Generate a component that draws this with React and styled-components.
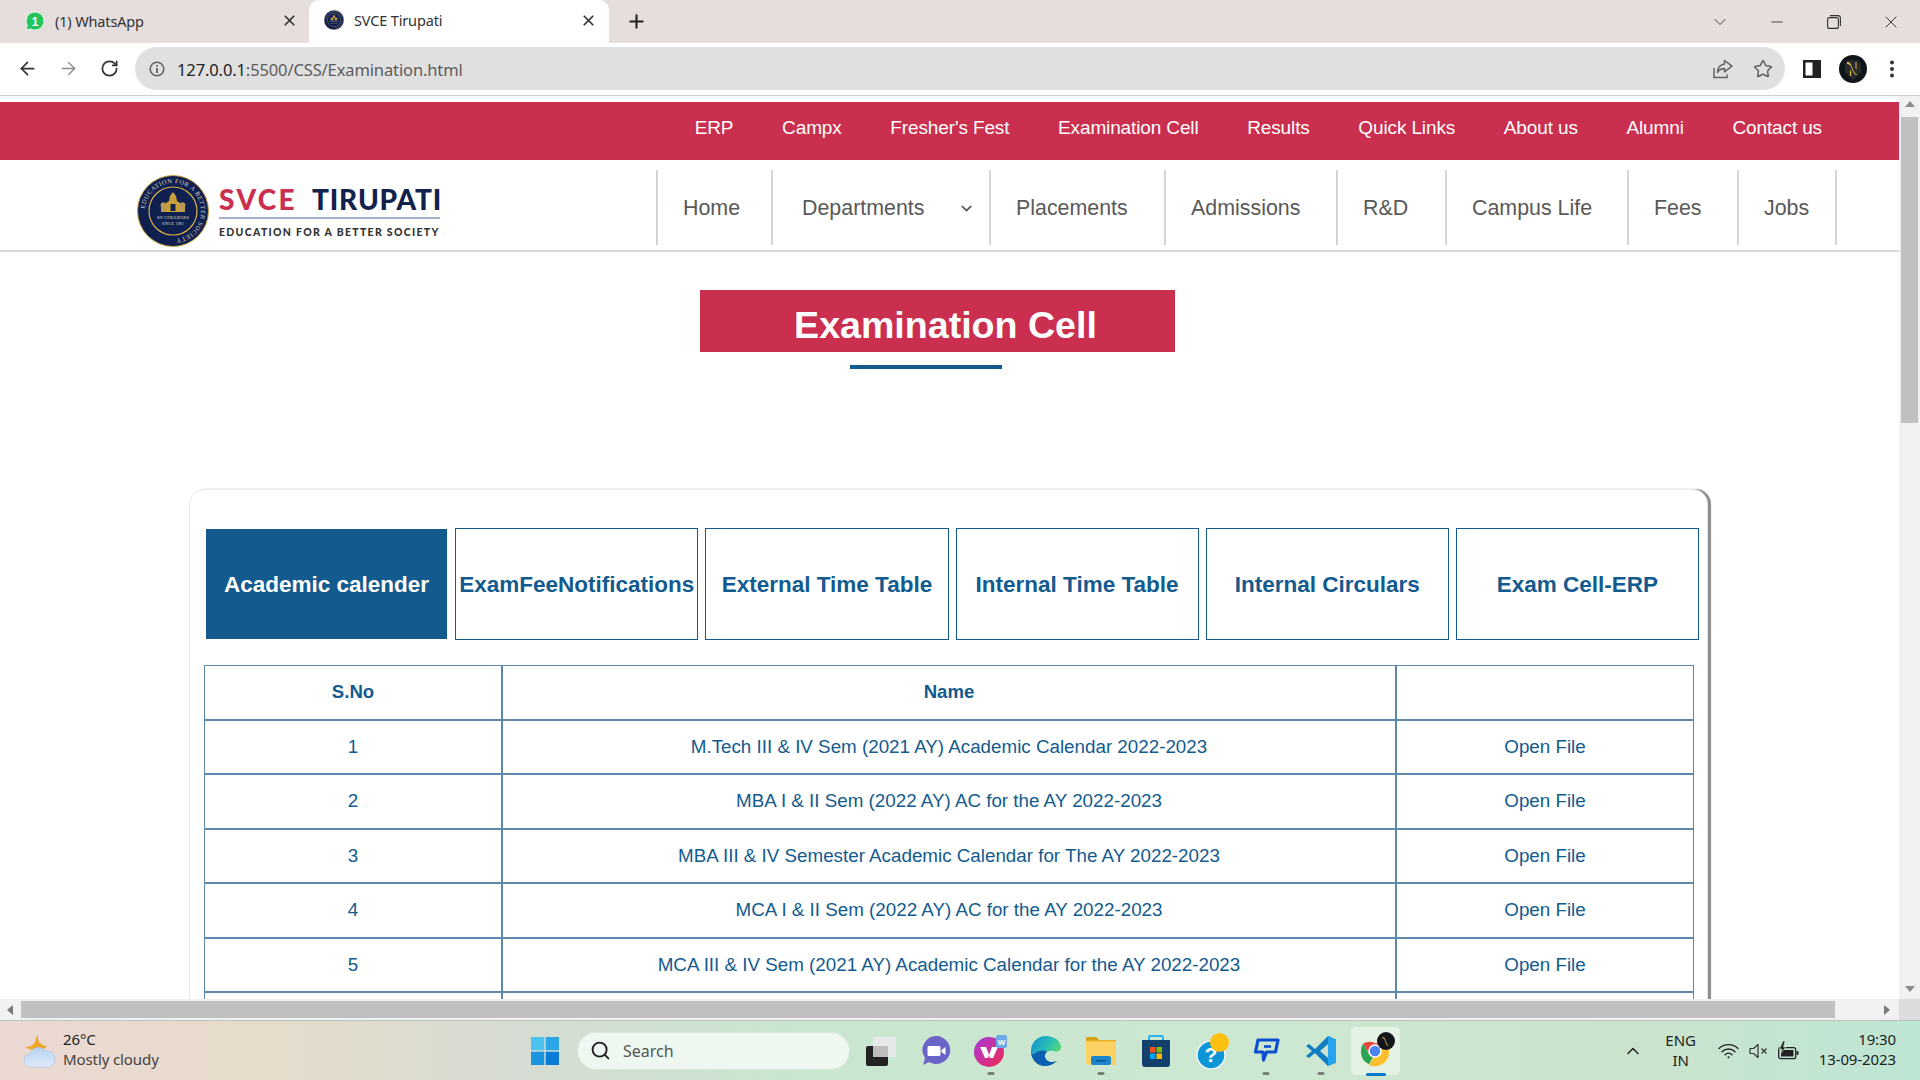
import styled, { createGlobalStyle } from 'styled-components'
import { ArrowLeft, ArrowRight, RotateCw, Star, ChevronDown, ChevronUp, X, Plus, Minus, Search } from 'lucide-react'

const GlobalStyle = createGlobalStyle`
    html, body {
        margin: 0;
        padding: 0;
        overflow: hidden;
        background: #fff;
        font-family: "Liberation Sans", Arial, sans-serif;
    }
    * { box-sizing: border-box; }
`;

const uiFont = `"Noto Sans", "Open Sans", sans-serif`;
const red = '#cb2f4f';
const blue = '#135b8e';

const Screen = styled.div`
    width: 1920px;
    height: 1080px;
    display: flex;
    flex-direction: column;
    overflow: hidden;
`;

/* browser chrome */
const TabStrip = styled.div`
    height: 43px;
    flex: none;
    display: flex;
    align-items: flex-end;
    background: #e6dedd;
    font-family: ${uiFont};
    color: #333;
`;

const Tab = styled.div`
    width: 300px;
    height: ${p => (p.$active ? '43px' : '40px')};
    margin-left: ${p => (p.$active ? '3px' : '6px')};
    padding: ${p => (p.$active ? '0 12px 3px 15px' : '0 8px 5px 19px')};
    display: flex;
    align-items: center;
    gap: 10px;
    font-size: 14.5px;
    background: ${p => (p.$active ? '#fff' : 'transparent')};
    border-radius: 10px 10px 0 0;
    letter-spacing: -0.15px;
`;

const TabTitle = styled.span`
    flex: 1;
`;

const NewTab = styled.div`
    width: 46px;
    height: 43px;
    margin-left: 4px;
    display: flex;
    align-items: center;
    justify-content: center;
    color: #222;
`;

const WindowControls = styled.div`
    margin-left: auto;
    padding-right: 1px;
    height: 43px;
    display: flex;
    align-items: center;
    color: #333;
`;

const WindowButton = styled.div`
    width: 57px;
    display: flex;
    justify-content: center;
`;

const Toolbar = styled.div`
    height: 53px;
    flex: none;
    display: flex;
    align-items: center;
    padding: 0 0 1px 0;
    background: #fff;
    border-bottom: 1px solid #cfcfcf;
`;

const NavButtons = styled.div`
    width: 135px;
    padding-left: 7px;
    display: flex;
    align-items: center;
`;

const NavButton = styled.div`
    width: 41px;
    display: flex;
    justify-content: center;
    color: ${p => (p.$off ? '#8a8a8a' : '#333')};
`;

const AddressBar = styled.div`
    width: 1650px;
    height: 43px;
    display: flex;
    align-items: center;
    padding: 0 0 0 14px;
    background: #e0e0e0;
    border-radius: 22px;
    font-family: ${uiFont};
    font-size: 16.5px;
    color: #5c5c5c;
`;

const Address = styled.span`
    margin-left: 12px;
    padding-top: 2px;
    letter-spacing: -0.12px;
    flex: 1;
    b {
        font-weight: 400;
        color: #222;
    }
`;

const PillIcons = styled.div`
    display: flex;
    align-items: center;
    gap: 19px;
    padding-right: 12px;
    color: #5f6368;
`;

const ToolbarIcons = styled.div`
    display: flex;
    align-items: center;
    margin-left: 18px;
    gap: 18px;
    svg:last-child {
        margin-left: 4px;
    }
`;

/* page area */
const Viewport = styled.div`
    flex: 1;
    min-height: 0;
    display: flex;
`;

const Page = styled.div`
    flex: 1;
    min-width: 0;
    padding-top: 6px;
    overflow: hidden;
    background: #fff;
`;

const VScroll = styled.div`
    width: 21px;
    flex: none;
    display: flex;
    flex-direction: column;
    align-items: center;
    background: #f1f1f1;
    color: #8c8c8c;
`;

const VThumb = styled.div`
    width: 17px;
    height: 306px;
    margin-top: 3px;
    background: #c0c0c0;
`;

const ScrollArrow = styled.div`
    height: 18px;
    width: 18px;
    flex: none;
    display: flex;
    align-items: center;
    justify-content: center;
    margin-top: ${p => (p.$end ? 'auto' : '0')};
    margin-left: ${p => p.$gap || 0}px;
`;

const HScroll = styled.div`
    height: 21px;
    flex: none;
    display: flex;
    align-items: center;
    padding-left: 2px;
    background: #f1f1f1;
    color: #7a7a7a;
`;

const HThumb = styled.div`
    width: 1814px;
    height: 17px;
    margin-left: 1px;
    background: #c0c0c0;
`;

const Corner = styled.div`
    width: 21px;
    height: 21px;
    margin-left: auto;
    background: #dcdcdc;
`;

const TopBar = styled.nav`
    height: 58px;
    display: flex;
    align-items: center;
    justify-content: flex-end;
    gap: 48.7px;
    padding: 0 77px 6px 0;
    background: ${red};
    color: #fff;
    font-size: 19px;
    letter-spacing: -0.13px;
`;

const MainHeader = styled.header`
    height: 92px;
    display: flex;
    border-bottom: 2px solid #ddd6d6;
`;

const Logo = styled.div`
    width: 656px;
    padding: 15px 0 0 137px;
    display: flex;
    gap: 10px;
`;

const LogoText = styled.div`
    display: flex;
    flex-direction: column;
    width: 221px;
    padding-top: 10px;
`;

const LogoTitle = styled.div`
    font-family: Lato, sans-serif;
    font-weight: 900;
    font-size: 28px;
    line-height: 29px;
    letter-spacing: 0.8px;
    white-space: nowrap;
    color: #12224e;
    padding-bottom: 3px;
    border-bottom: 2px solid #a3b1c6;
    span {
        color: ${red};
        letter-spacing: 2.4px;
        margin-right: 15px;
    }
`;

const LogoTag = styled.div`
    font-family: Lato, sans-serif;
    font-weight: 900;
    font-size: 10.5px;
    letter-spacing: 1.3px;
    white-space: nowrap;
    color: #333;
    margin-top: 7px;
`;

const MainNav = styled.nav`
    display: flex;
    height: 75px;
    margin-top: 10px;
    border-right: 2px solid #d9d3d3;
`;

const MainNavItem = styled.div`
    width: ${p => p.$w}px;
    padding: 2px 0 0 ${p => (p.$drop ? 29 : 25)}px;
    display: flex;
    align-items: center;
    border-left: 2px solid #d9d3d3;
    font-size: 21.4px;
    color: #595959;
    svg {
        margin-left: 34px;
    }
`;

const Banner = styled.h1`
    width: 475px;
    height: 62px;
    margin: 38px 0 0 700px;
    padding: 8px 0 0 16px;
    display: flex;
    align-items: center;
    justify-content: center;
    background: ${red};
    color: #fff;
    font-size: 37.6px;
    font-weight: 700;
`;

const BannerRule = styled.div`
    width: 152px;
    height: 4px;
    margin: 13px 0 0 850px;
    background: ${blue};
`;

const Card = styled.section`
    width: 1519px;
    margin: 120px 0 0 189px;
    padding: 38px 8px 0 15px;
    background: #fff;
    border: 1px solid #e8e8e8;
    border-radius: 15px 15px 0 0;
    box-shadow: 3px 0 1px #8c8c8c;
`;

const TabGrid = styled.div`
    display: grid;
    grid-template-columns: repeat(6, 1fr);
    gap: 7px;
`;

const TabButton = styled.div`
    height: 112px;
    padding-top: 1px;
    display: flex;
    align-items: center;
    justify-content: center;
    border: 1px solid ${p => (p.$active ? 'transparent' : blue)};
    background: ${p => (p.$active ? blue : '#fff')};
    background-clip: padding-box;
    color: ${p => (p.$active ? '#fff' : blue)};
    font-size: 22.5px;
    font-weight: 700;
    white-space: nowrap;
`;

const Table = styled.table`
    width: 1490px;
    margin: 25px 0 0 -1px;
    border-collapse: separate;
    border-spacing: 0;
    table-layout: fixed;
    border: 1px solid #5f89aa;
    border-bottom: none;
    color: ${blue};
    font-size: 18.8px;
    text-align: center;
`;

const Cell = styled.td`
    height: 54.5px;
    padding: 0;
    border-bottom: 2px solid #5f89aa;
    border-right: 2px solid #5f89aa;
    font-weight: ${p => (p.$head ? 700 : 400)};
    font-size: ${p => (p.$head ? '18.6px' : 'inherit')};
    &:last-child {
        border-right: none;
    }
`;

/* taskbar */
const Taskbar = styled.div`
    height: 60px;
    flex: none;
    display: flex;
    align-items: center;
    border-top: 1px solid #b8c2b8;
    background: linear-gradient(90deg, #ecd8d3 0%, #e6dccb 14%, #d6dcd3 27%, #c9e6cf 42%, #cde8d2 65%, #cbe3cd 85%, #bde6d4 100%);
    font-family: ${uiFont};
    color: #222;
`;

const Weather = styled.div`
    width: 525px;
    padding-left: 24px;
    display: flex;
    align-items: center;
    gap: 7px;
`;

const WeatherText = styled.div`
    font-size: 15px;
    line-height: 20px;
    margin-top: -4px;
    letter-spacing: -0.1px;
    span {
        display: block;
        color: #444;
    }
`;

const StartCell = styled.div`
    width: 40px;
    display: flex;
    justify-content: center;
`;

const SearchPill = styled.div`
    width: 273px;
    height: 38px;
    margin: 0 3px 0 12px;
    padding-left: 12px;
    display: flex;
    align-items: center;
    gap: 12px;
    border-radius: 19px;
    background: #eef7f0;
    border: 1px solid #dbe8dc;
    font-size: 16px;
    color: #555;
`;

const TaskCell = styled.div`
    position: relative;
    width: 55px;
    height: 48px;
    display: flex;
    align-items: center;
    justify-content: center;
    &::before {
        content: '';
        position: absolute;
        inset: 0 3px;
        border-radius: 5px;
        background: ${p => (p.$active ? '#e4f2e3' : 'transparent')};
    }
    svg {
        position: relative;
    }
`;

const RunDot = styled.span`
    position: absolute;
    bottom: ${p => (p.$active ? '-1px' : '0')};
    left: 50%;
    width: ${p => (p.$active ? '20px' : '7px')};
    height: 3px;
    transform: translateX(-50%);
    border-radius: 2px;
    background: ${p => (p.$active ? '#0b78d0' : '#778077')};
`;

const Tray = styled.div`
    margin-left: auto;
    padding-right: 24px;
    display: flex;
    align-items: center;
    font-size: 15px;
`;

const Lang = styled.div`
    width: 46px;
    margin: -2px 0 0 15px;
    text-align: center;
    line-height: 20px;
`;

const TrayIcons = styled.div`
    display: flex;
    align-items: center;
    gap: 10px;
    margin-left: 14px;
`;

const Clock = styled.div`
    margin: -4px 0 0 20px;
    text-align: right;
    line-height: 20px;
    letter-spacing: -0.1px;
`;

const Medallion = ({ size = 72 }) => (
    <svg width={size} height={size} viewBox="0 0 72 72">
        <defs>
            <path id="ringPath" d="M36 36 m-28 0 a28 28 0 1 1 56 0 a28 28 0 1 1 -56 0" />
        </defs>
        <circle cx="36" cy="36" r="35.5" fill="#0f1f50" stroke="#c9a23f" />
        <circle cx="36" cy="36" r="24" fill="none" stroke="#d8ae45" strokeWidth="1.2" />
        <text fontSize="6.4" fill="#d9d6c4" fontFamily="Liberation Serif, serif" letterSpacing="0.55">
            <textPath href="#ringPath" startOffset="2">EDUCATION FOR A BETTER SOCIETY</textPath>
        </text>
        <path d="M36 17 l3 4 l1 5 l3 2 v9 h-14 v-9 l3 -2 l1 -5z" fill="#c99f3c" />
        <path d="M24 32 a3 3 0 1 1 5 0 v5 h-5z M43 32 a3 3 0 1 1 5 0 v5 h-5z" fill="#b89a55" />
        <rect x="33.5" y="29" width="5" height="7" fill="#14244f" />
        <text x="36" y="43.500" fontSize="4.800" fill="#e4e0cf" textAnchor="middle" fontFamily="Liberation Serif, serif">SV COLLEGES</text>
        <text x="36" y="50" fontSize="3.600" fill="#e4e0cf" textAnchor="middle" fontFamily="Liberation Serif, serif" letterSpacing="0.4">SINCE 1981</text>
    </svg>
)

const WhatsAppIcon = () => (
    <svg width="20" height="20" viewBox="0 0 20 20">
        <path d="M10 1a9 9 0 0 0-7.7 13.6L1.2 19l4.5-1.1A9 9 0 1 0 10 1z" fill="#25c45a" stroke="#e9f7ea" />
        <text x="10" y="14.5" fontSize="12" fontWeight="700" fill="#fff" textAnchor="middle" fontFamily="Liberation Sans, sans-serif">1</text>
    </svg>
)

const ShareIcon = () => (
    <svg width="22" height="20" viewBox="0 0 22 20" fill="none" stroke="currentColor" strokeWidth="1.5">
        <path d="M2 9v9.5h13v-3" />
        <path d="M12.5 1.5 20 7.2l-7.5 5.6V9.4c-3.2 0-5.2 1.2-7 4 .4-4.700 3-7.800 7-8.300z" strokeLinejoin="round" />
    </svg>
)

const SidebarIcon = () => (
    <svg width="18" height="18" viewBox="0 0 18 18">
        <path d="M0 0h18v18H0z" fill="#222" />
        <path d="M2.500 2.500h7v13h-7z" fill="#fff" />
    </svg>
)

const Avatar = () => (
    <svg width="28" height="28" viewBox="0 0 28 28">
        <circle cx="14" cy="14" r="14" fill="#10151a" />
        <path d="M6 9 9 5h10l3 4v8l-8 8-8-8z" fill="#262b30" />
        <path d="M8 7c3 0 3.500 1 5 5s3 7 6 8l-2 0c-2-1-3.500-4-4.500-7S10 9 8 9zM11 21l0-7 1.200 3 0 4zM17.500 7v8l-1-2V7z" fill="#d9b33f" />
    </svg>
)

const DotsIcon = () => (
    <svg width="6" height="18" viewBox="0 0 6 18" fill="#333">
        <circle cx="3" cy="2.500" r="2" />
        <circle cx="3" cy="9" r="2" />
        <circle cx="3" cy="15.500" r="2" />
    </svg>
)

const InfoIcon = () => (
    <svg width="16" height="16" viewBox="0 0 16 16" fill="none" stroke="#5f6368" strokeWidth="1.500">
        <circle cx="8" cy="8" r="6.800" />
        <path d="M8 7v5M8 4v1.700" strokeWidth="1.800" />
    </svg>
)

const RestoreIcon = () => (
    <svg width="14" height="14" viewBox="0 0 14 14" fill="none" stroke="#333" strokeWidth="1.100">
        <rect x="0.600" y="2.600" width="10.800" height="10.800" rx="2" />
        <path d="M3 .6h8a2.400 2.400 0 0 1 2.400 2.400v8" />
    </svg>
)

const Triangle = ({ dir }) => {
    const pts = { up: '0,7 5,1 10,7', down: '0,1 5,7 10,1', left: '7,0 1,5 7,10', right: '1,0 7,5 1,10' }
    return (
        <svg width="10" height="10" viewBox="0 0 10 10" fill="currentColor">
            <polygon points={pts[dir]} />
        </svg>
    )
}

const WeatherIcon = () => (
    <svg width="32" height="36" viewBox="0 0 32 36">
        <path d="M14 1c-1 6 1 11 9 12-2 3-6 4-11 4-4 0-8-1-11-3 4 0 8-1 10-5 1-3 1-6 3-8z" fill="#f0a52b" />
        <defs>
            <linearGradient id="cloudFill" x1="0" y1="0" x2="0" y2="1">
                <stop offset="0" stopColor="#b7d3f2" />
                <stop offset="1" stopColor="#dfeaf8" />
            </linearGradient>
        </defs>
        <path d="M7 34a6.500 6.500 0 0 1-1-13 8.500 8.500 0 0 1 15-3 7 7 0 0 1 4 16z" fill="url(#cloudFill)" stroke="#a6c6ea" strokeWidth="0.700" />
    </svg>
)

const StartIcon = () => (
    <svg width="30" height="30" viewBox="0 0 30 30">
        <path d="M1 1h13.300v13.300H1z" fill="#4cc2f1" />
        <path d="M15.700 1H29v13.300H15.700z" fill="#2ba6e6" />
        <path d="M1 15.700h13.300V29H1z" fill="#1b94df" />
        <path d="M15.700 15.700H29V29H15.700z" fill="#0a7bd6" />
    </svg>
)

const TaskViewIcon = () => (
    <svg width="30" height="30" viewBox="0 0 30 30">
        <rect x="0" y="10" width="22" height="20" rx="2" fill="#222" />
        <rect x="7" y="1" width="23" height="20" rx="2" fill="#e9e9e9" fillOpacity="0.9" />
        <rect x="7" y="10" width="15" height="11" fill="#bdbdbd" />
    </svg>
)

const MeetIcon = () => (
    <svg width="30" height="32" viewBox="0 0 30 32">
        <path d="M15 1a14 14 0 1 1-7 26l-6 3 2-7A14 14 0 0 1 15 1z" fill="#6a63c8" />
        <path d="M8 11h10a1.500 1.500 0 0 1 1.500 1.500v7A1.500 1.500 0 0 1 18 21H8a1.500 1.500 0 0 1-1.500-1.500v-7A1.500 1.500 0 0 1 8 11zM20.500 15l4-3v8l-4-3z" fill="#fff" />
    </svg>
)

const WpsIcon = () => (
    <svg width="34" height="34" viewBox="0 0 34 34">
        <defs>
            <linearGradient id="wpsFill" x1="0" y1="0" x2="1" y2="1">
                <stop offset="0" stopColor="#a53be0" />
                <stop offset="1" stopColor="#f02850" />
            </linearGradient>
        </defs>
        <circle cx="15" cy="18" r="15" fill="url(#wpsFill)" />
        <path d="M6 13h6l3 8 3-8h6l-5 11h-3l-1-3-1 3h-3z" fill="#fff" />
        <rect x="22" y="1" width="11" height="13" rx="2" fill="#6fa8e8" />
        <text x="27.500" y="11" fontSize="8" fontWeight="700" fill="#fff" textAnchor="middle" fontFamily="Liberation Sans, sans-serif">W</text>
    </svg>
)

const EdgeIcon = () => (
    <svg width="32" height="32" viewBox="0 0 32 32">
        <defs>
            <linearGradient id="edgeTop" x1="0" y1="0" x2="1" y2="0.600">
                <stop offset="0" stopColor="#0f8fd6" />
                <stop offset="0.600" stopColor="#2bc2b0" />
                <stop offset="1" stopColor="#6fdc5d" />
            </linearGradient>
        </defs>
        <path d="M16 1C7 1 1 8 1 16c0 9 7 15 14 15 4 0 9-2 12-5-5 2-11 1-12-4-1-4 3-7 8-6 3 1 8 1 8-4C31 6 24 1 16 1z" fill="url(#edgeTop)" />
        <path d="M1 16c0 9 7 15 14 15 4 0 9-2 12-5-5 2-11 1-12-4-.6-2 .4-4 2-5-2-2-7-2-10 0-3 2-5 4-6-1z" fill="#0c5fb0" />
    </svg>
)

const FolderIcon = () => (
    <svg width="30" height="28" viewBox="0 0 30 28">
        <path d="M0 2a2 2 0 0 1 2-2h8l3 3h-13z" fill="#d79f10" />
        <path d="M0 3h30v23a2 2 0 0 1-2 2H2a2 2 0 0 1-2-2z" fill="#fcd265" />
        <path d="M0 3h30v1.500H0z" fill="#e9ae25" />
        <rect x="5" y="19" width="20" height="9" rx="2" fill="#1a86d0" />
        <rect x="10" y="23" width="10" height="1.500" fill="#0c4e85" />
    </svg>
)

const StoreIcon = () => (
    <svg width="30" height="32" viewBox="0 0 30 32">
        <path d="M8 6V2.500A1.500 1.500 0 0 1 9.500 1h11A1.500 1.500 0 0 1 22 2.500V6" fill="none" stroke="#2fb3ef" strokeWidth="2" />
        <path d="M1 5h28v24a3 3 0 0 1-3 3H4a3 3 0 0 1-3-3z" fill="#14406e" />
        <path d="M9 12h5.500v5.500H9z" fill="#f25022" />
        <path d="M15.500 12H21v5.500h-5.500z" fill="#7fba00" />
        <path d="M9 18.500h5.500V24H9z" fill="#00a4ef" />
        <path d="M15.500 18.500H21V24h-5.500z" fill="#ffb900" />
    </svg>
)

const HelpIcon = () => (
    <svg width="36" height="38" viewBox="-3 0 36 38">
        <circle cx="15" cy="23" r="14" fill="#0d95d8" stroke="#eaf7fb" strokeWidth="1.500" />
        <text x="15" y="30" fontSize="21" fontWeight="700" fill="#fff" textAnchor="middle" fontFamily="Liberation Sans, sans-serif">?</text>
        <circle cx="23.500" cy="10.500" r="9.500" fill="#fcc010" />
    </svg>
)

const ChatIcon = () => (
    <svg width="30" height="28" viewBox="0 0 30 28" fill="none" stroke="#0a4fd0" strokeLinejoin="round">
        <path d="M7 3h20l-2.500 12H15.500l-3 8-.5-8H4.500z" strokeWidth="3.200" />
        <path d="M13 9.500h7" strokeWidth="2.600" />
    </svg>
)

const CodeIcon = () => (
    <svg width="30" height="30" viewBox="0 0 30 30">
        <path d="M22 0l8 3.500v23L22 30 9 17l-6 5-3-2 6-5-6-5 3-2 6 5z" fill="#0f7cc4" />
        <path d="M22 0l8 3.500v23L22 30z" fill="#27a4ee" />
        <path d="M22 8l-8 7 8 7z" fill="#cbe3cd" />
    </svg>
)

const ChromeIcon = () => (
    <svg width="38" height="38" viewBox="-1 0 38 38">
        <path d="M17 5a14 14 0 0 1 12.100 7H17a7 7 0 0 0-6 3.500L5 5.500A14 14 0 0 1 17 5z" fill="#e8453c" transform="translate(0 6)" />
        <path d="M3 19a14 14 0 0 1 2-7.500l6 10.500a7 7 0 0 0 4 3.300l-4 7A14 14 0 0 1 3 19z" fill="#2ea44f" />
        <path d="M31 19a14 14 0 0 1-20 13l6-10a7 7 0 0 0 5-7h8.500c.3 1.300.5 2.600.5 4z" fill="#fbc02d" transform="translate(0 1)" />
        <circle cx="17" cy="19" r="6" fill="#4a84f0" stroke="#fff" strokeWidth="1.500" />
        <circle cx="28" cy="9" r="9" fill="#14151a" />
        <path d="M24 5c3 0 3 1 4 4s2 5 4 5l-1.500 0c-2 0-3-3-3.500-5S25 6 24 6z" fill="#a88a3a" />
    </svg>
)

const WifiIcon = () => (
    <svg width="21" height="16" viewBox="0 0 21 16" fill="none" stroke="#222" strokeWidth="1.300" strokeLinecap="round">
        <path d="M1 5.500a13.500 13.500 0 0 1 19 0" />
        <path d="M4 8.700a9.200 9.200 0 0 1 13 0" />
        <path d="M7 11.700a5 5 0 0 1 7 0" />
        <circle cx="10.500" cy="14.300" r="1" fill="#222" stroke="none" />
    </svg>
)

const MuteIcon = () => (
    <svg width="19" height="16" viewBox="0 0 19 16" fill="none" stroke="#333" strokeWidth="1.200">
        <path d="M1 5.500h3.500L9 1.500v13l-4.500-4H1z" strokeLinejoin="round" />
        <path d="M12.500 5.500l5 5M17.500 5.500l-5 5" />
    </svg>
)

const BatteryIcon = () => (
    <svg width="21" height="20" viewBox="0 0 21 20">
        <rect x="0.700" y="6.700" width="17" height="11" rx="2" fill="none" stroke="#222" strokeWidth="1.300" />
        <rect x="3" y="9" width="12.500" height="6.500" fill="#222" />
        <rect x="18.500" y="10" width="2" height="4" rx="1" fill="#222" />
        <path d="M5 0 1.500 8H4l-1 4 5-6H5.500L7 0z" fill="#222" stroke="#cbe3cd" strokeWidth="0.600" />
    </svg>
)

const topLinks = ['ERP', 'Campx', "Fresher's Fest", 'Examination Cell', 'Results', 'Quick Links', 'About us', 'Alumni', 'Contact us']

const mainLinks = [
    { label: 'Home', w: 115 },
    { label: 'Departments', w: 218, drop: true },
    { label: 'Placements', w: 175 },
    { label: 'Admissions', w: 172 },
    { label: 'R&D', w: 109 },
    { label: 'Campus Life', w: 182 },
    { label: 'Fees', w: 110 },
    { label: 'Jobs', w: 98 },
]

const examTabs = ['Academic calender', 'ExamFeeNotifications', 'External Time Table', 'Internal Time Table', 'Internal Circulars', 'Exam Cell-ERP']

const rows = [
    'M.Tech III & IV Sem (2021 AY) Academic Calendar 2022-2023',
    'MBA I & II Sem (2022 AY) AC for the AY 2022-2023',
    'MBA III & IV Semester Academic Calendar for The AY 2022-2023',
    'MCA I & II Sem (2022 AY) AC for the AY 2022-2023',
    'MCA III & IV Sem (2021 AY) Academic Calendar for the AY 2022-2023',
]

const taskIcons = [
    { Icon: TaskViewIcon },
    { Icon: MeetIcon },
    { Icon: WpsIcon, running: true },
    { Icon: EdgeIcon },
    { Icon: FolderIcon, running: true },
    { Icon: StoreIcon },
    { Icon: HelpIcon },
    { Icon: ChatIcon, running: true },
    { Icon: CodeIcon, running: true },
    { Icon: ChromeIcon, active: true },
]

const App = () => {
    return (
        <Screen>
            <GlobalStyle />
            <TabStrip>
                <Tab>
                    <WhatsAppIcon />
                    <TabTitle>(1) WhatsApp</TabTitle>
                    <X size={17} strokeWidth={2.4} />
                </Tab>
                <Tab $active>
                    <Medallion size={20} />
                    <TabTitle>SVCE Tirupati</TabTitle>
                    <X size={17} strokeWidth={2.4} />
                </Tab>
                <NewTab><Plus size={21} strokeWidth={2.4} /></NewTab>
                <WindowControls>
                    <WindowButton><ChevronDown size={20} strokeWidth={1.1} /></WindowButton>
                    <WindowButton><Minus size={18} strokeWidth={1.2} /></WindowButton>
                    <WindowButton><RestoreIcon /></WindowButton>
                    <WindowButton><X size={20} strokeWidth={1.2} /></WindowButton>
                </WindowControls>
            </TabStrip>
            <Toolbar>
                <NavButtons>
                    <NavButton><ArrowLeft size={21} strokeWidth={2} /></NavButton>
                    <NavButton $off><ArrowRight size={21} strokeWidth={1.6} /></NavButton>
                    <NavButton><RotateCw size={19} strokeWidth={2.2} /></NavButton>
                </NavButtons>
                <AddressBar>
                    <InfoIcon />
                    <Address><b>127.0.0.1</b>:5500/CSS/Examination.html</Address>
                    <PillIcons>
                        <ShareIcon />
                        <Star size={20} strokeWidth={1.8} />
                    </PillIcons>
                </AddressBar>
                <ToolbarIcons>
                    <SidebarIcon />
                    <Avatar />
                    <DotsIcon />
                </ToolbarIcons>
            </Toolbar>
            <Viewport>
                <Page>
                    <TopBar>
                        {topLinks.map(link => <span key={link}>{link}</span>)}
                    </TopBar>
                    <MainHeader>
                        <Logo>
                            <Medallion />
                            <LogoText>
                                <LogoTitle><span>SVCE</span>TIRUPATI</LogoTitle>
                                <LogoTag>EDUCATION FOR A BETTER SOCIETY</LogoTag>
                            </LogoText>
                        </Logo>
                        <MainNav>
                            {mainLinks.map(item => (
                                <MainNavItem key={item.label} $w={item.w} $drop={item.drop}>
                                    {item.label}
                                    {item.drop && <ChevronDown size={17} strokeWidth={2.4} />}
                                </MainNavItem>
                            ))}
                        </MainNav>
                    </MainHeader>
                    <Banner>Examination Cell</Banner>
                    <BannerRule />
                    <Card>
                        <TabGrid>
                            {examTabs.map((tab, i) => <TabButton key={tab} $active={i === 0}>{tab}</TabButton>)}
                        </TabGrid>
                        <Table>
                            <colgroup>
                                <col width="298" />
                                <col width="894" />
                                <col width="296" />
                            </colgroup>
                            <tbody>
                                <tr>
                                    <Cell $head>S.No</Cell>
                                    <Cell $head>Name</Cell>
                                    <Cell $head></Cell>
                                </tr>
                                {rows.map((row, i) => (
                                    <tr key={row}>
                                        <Cell>{i + 1}</Cell>
                                        <Cell>{row}</Cell>
                                        <Cell>Open File</Cell>
                                    </tr>
                                ))}
                                <tr>
                                    <Cell></Cell>
                                    <Cell></Cell>
                                    <Cell></Cell>
                                </tr>
                            </tbody>
                        </Table>
                    </Card>
                </Page>
                <VScroll>
                    <ScrollArrow><Triangle dir="up" /></ScrollArrow>
                    <VThumb />
                    <ScrollArrow $end><Triangle dir="down" /></ScrollArrow>
                </VScroll>
            </Viewport>
            <HScroll>
                <ScrollArrow><Triangle dir="left" /></ScrollArrow>
                <HThumb />
                <ScrollArrow $gap={44}><Triangle dir="right" /></ScrollArrow>
                <Corner />
            </HScroll>
            <Taskbar>
                <Weather>
                    <WeatherIcon />
                    <WeatherText>26°C<span>Mostly cloudy</span></WeatherText>
                </Weather>
                <StartCell><StartIcon /></StartCell>
                <SearchPill><Search size={21} strokeWidth={2.2} color="#222" />Search</SearchPill>
                {taskIcons.map(({ Icon, running, active }, i) => (
                    <TaskCell key={i} $active={active}>
                        <Icon />
                        {(running || active) && <RunDot $active={active} />}
                    </TaskCell>
                ))}
                <Tray>
                    <ChevronUp size={20} strokeWidth={1.8} />
                    <Lang>ENG<br />IN</Lang>
                    <TrayIcons>
                        <WifiIcon />
                        <MuteIcon />
                        <BatteryIcon />
                    </TrayIcons>
                    <Clock>19:30<br />13-09-2023</Clock>
                </Tray>
            </Taskbar>
        </Screen>
    )
}

export default App
